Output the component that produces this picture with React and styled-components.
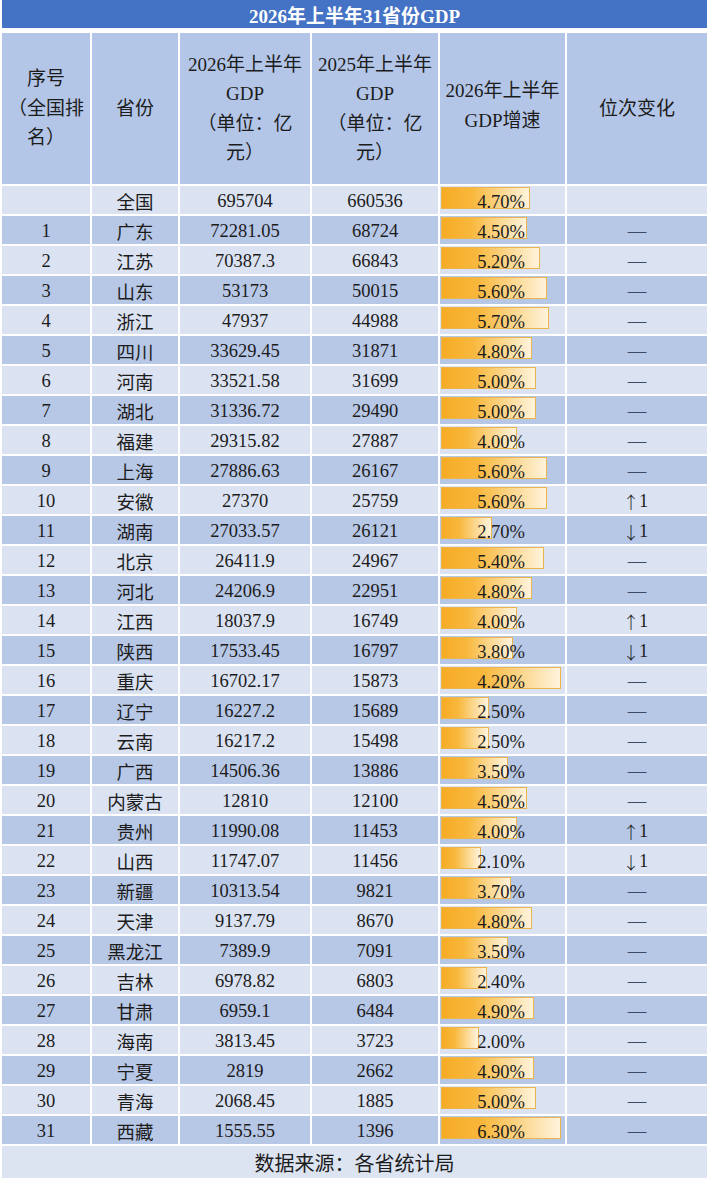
import React from "react";
import styled, { createGlobalStyle } from "styled-components";

const GlobalStyle = createGlobalStyle`
  body {
    margin: 0;
    background: #ffffff;
  }
`;

const FONT = `"Liberation Serif", "Noto Sans CJK SC", serif`;

const Sheet = styled.div`
  width: 708px;
  box-sizing: border-box;
  padding: 0 1px 0 2px;
  font-family: ${FONT};
  color: #1c1c1c;
`;

const TitleBar = styled.div`
  height: 28px;
  margin-bottom: 5px;
  background-color: #4472c4;
  color: #ffffff;
  font-weight: bold;
  font-size: 19px;
  display: flex;
  align-items: center;
  justify-content: center;
`;

const Table = styled.div`
  display: grid;
  grid-template-columns: 88px 86px 130px 126px 125px 1fr;
  gap: 2px;
`;

const HeaderCell = styled.div`
  height: 151px;
  background-color: #b4c6e7;
  display: flex;
  align-items: center;
  justify-content: center;
  text-align: center;
  font-size: 19px;
  line-height: 29.5px;
  padding-bottom: ${(props) => (props.$lift ? "6px" : "0")};
  box-sizing: border-box;
`;

const Cell = styled.div`
  height: 28px;
  background-color: ${(props) => (props.$dark ? "#b7c7e6" : "#dbe2f1")};
  display: flex;
  align-items: center;
  justify-content: center;
  font-size: 18.5px;
  padding-top: 2px;
  box-sizing: border-box;
  white-space: nowrap;
`;

const ChangeCell = styled(Cell)`
  color: ${(props) => (props.$flat ? "#3d4a66" : "#1c1c1c")};
  gap: 3px;
`;

const Arrow = styled.span`
  font-family: "Noto Sans CJK SC", sans-serif;
  font-size: 17px;
  font-weight: 300;
  width: 10px;
  display: inline-flex;
  justify-content: center;
`;

const BarCell = styled.div`
  height: 28px;
  background-color: ${(props) => (props.$dark ? "#b7c7e6" : "#dbe2f1")};
  display: grid;
  grid-template-areas: "stack";
  font-size: 18.5px;
`;

const Bar = styled.div`
  grid-area: stack;
  align-self: start;
  margin: 1px 0 0 1px;
  height: 22px;
  box-sizing: border-box;
  border: 1px solid #eab54d;
  background: linear-gradient(
    to right,
    #f6ab25 0%,
    #f8b83d 35%,
    #fcd993 70%,
    #fff3dc 100%
  );
`;

const Pct = styled.div`
  grid-area: stack;
  justify-self: end;
  align-self: center;
  padding: 4px 40px 0 0;
  position: relative;
`;

const Footer = styled.div`
  grid-column: 1 / -1;
  height: 32px;
  background-color: #dce3f1;
  display: flex;
  align-items: center;
  justify-content: center;
  font-size: 20px;
`;

const rows = [
  ["", "全国", "695704", "660536", 4.7, ""],
  ["1", "广东", "72281.05", "68724", 4.5, "—"],
  ["2", "江苏", "70387.3", "66843", 5.2, "—"],
  ["3", "山东", "53173", "50015", 5.6, "—"],
  ["4", "浙江", "47937", "44988", 5.7, "—"],
  ["5", "四川", "33629.45", "31871", 4.8, "—"],
  ["6", "河南", "33521.58", "31699", 5.0, "—"],
  ["7", "湖北", "31336.72", "29490", 5.0, "—"],
  ["8", "福建", "29315.82", "27887", 4.0, "—"],
  ["9", "上海", "27886.63", "26167", 5.6, "—"],
  ["10", "安徽", "27370", "25759", 5.6, "up"],
  ["11", "湖南", "27033.57", "26121", 2.7, "down"],
  ["12", "北京", "26411.9", "24967", 5.4, "—"],
  ["13", "河北", "24206.9", "22951", 4.8, "—"],
  ["14", "江西", "18037.9", "16749", 4.0, "up"],
  ["15", "陕西", "17533.45", "16797", 3.8, "down"],
  ["16", "重庆", "16702.17", "15873", 4.2, "—", 6.3],
  ["17", "辽宁", "16227.2", "15689", 2.5, "—"],
  ["18", "云南", "16217.2", "15498", 2.5, "—"],
  ["19", "广西", "14506.36", "13886", 3.5, "—"],
  ["20", "内蒙古", "12810", "12100", 4.5, "—"],
  ["21", "贵州", "11990.08", "11453", 4.0, "up"],
  ["22", "山西", "11747.07", "11456", 2.1, "down"],
  ["23", "新疆", "10313.54", "9821", 3.7, "—"],
  ["24", "天津", "9137.79", "8670", 4.8, "—"],
  ["25", "黑龙江", "7389.9", "7091", 3.5, "—"],
  ["26", "吉林", "6978.82", "6803", 2.4, "—"],
  ["27", "甘肃", "6959.1", "6484", 4.9, "—"],
  ["28", "海南", "3813.45", "3723", 2.0, "—"],
  ["29", "宁夏", "2819", "2662", 4.9, "—"],
  ["30", "青海", "2068.45", "1885", 5.0, "—"],
  ["31", "西藏", "1555.55", "1396", 6.3, "—"],
];

const renderChange = (change) => {
  if (change === "up" || change === "down") {
    return (
      <>
        <Arrow>{change === "up" ? "↑" : "↓"}</Arrow>
        <span>1</span>
      </>
    );
  }
  return change;
};

const App = () => {
  return (
    <>
      <GlobalStyle />
      <Sheet>
        <TitleBar>2026年上半年31省份GDP</TitleBar>
        <Table>
          <HeaderCell>
            <div>
              序号
              <br />
              （全国排
              <br />
              名）
            </div>
          </HeaderCell>
          <HeaderCell>省份</HeaderCell>
          <HeaderCell>
            <div>
              2026年上半年
              <br />
              GDP
              <br />
              （单位：亿
              <br />
              元）
            </div>
          </HeaderCell>
          <HeaderCell>
            <div>
              2025年上半年
              <br />
              GDP
              <br />
              （单位：亿
              <br />
              元）
            </div>
          </HeaderCell>
          <HeaderCell $lift>
            <div>
              2026年上半年
              <br />
              GDP增速
            </div>
          </HeaderCell>
          <HeaderCell>位次变化</HeaderCell>

          {rows.map(([rank, name, gdp26, gdp25, growth, change, barValue], i) => {
            const dark = i % 2 === 1;
            const barWidth = Math.round((barValue || growth) * 19);
            return (
              <React.Fragment key={name}>
                <Cell $dark={dark}>{rank}</Cell>
                <Cell $dark={dark}>{name}</Cell>
                <Cell $dark={dark}>{gdp26}</Cell>
                <Cell $dark={dark}>{gdp25}</Cell>
                <BarCell $dark={dark}>
                  <Bar style={{ width: barWidth }} />
                  <Pct>{growth.toFixed(2)}%</Pct>
                </BarCell>
                <ChangeCell $dark={dark} $flat={change === "—"}>
                  {renderChange(change)}
                </ChangeCell>
              </React.Fragment>
            );
          })}

          <Footer>数据来源：各省统计局</Footer>
        </Table>
      </Sheet>
    </>
  );
};

export default App;
